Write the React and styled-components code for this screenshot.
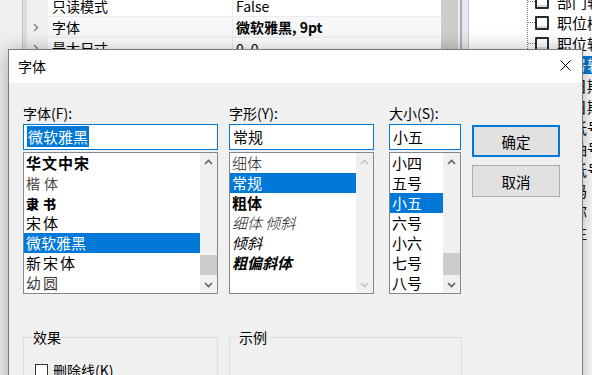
import React from 'react';
import styled, { createGlobalStyle, css } from 'styled-components';

const GlobalStyle = createGlobalStyle`
  html, body { margin: 0; padding: 0; width: 592px; height: 375px; overflow: hidden; background: #fff; }
  body { font-family: "Noto Sans CJK SC", "Noto Sans", sans-serif; font-size: 14px; color: #000; }
  #root { width: 592px; height: 375px; overflow: hidden; }
  * { box-sizing: border-box; }
`;

const Stage = styled.div`
  position: relative;
  width: 592px;
  height: 375px;
  overflow: hidden;
`;

/* ---------- background window ---------- */
const Backdrop = styled.div`
  display: flex;
  height: 100%;
`;
const Gutter = styled.div`
  width: 22px;
  flex-shrink: 0;
  background: #f0f0f0;
`;
const GutterEdge = styled.div`
  width: 5px;
  flex-shrink: 0;
  background: #dedede;
  border-left: 1px solid #c4c4c4;
`;
const PropGrid = styled.div`
  width: 414px;
  flex-shrink: 0;
  display: flex;
  flex-direction: column;
  margin-top: -4px;
`;
const GridRow = styled.div`
  display: flex;
  height: 21px;
  font-size: 14px;
  line-height: 20px;
`;
const Expander = styled.div`
  width: 21px;
  flex-shrink: 0;
  background: #f0f0f0;
  display: flex;
  align-items: center;
  justify-content: center;
  padding-right: 4px;
`;
const GridLabel = styled.div`
  width: 184px;
  flex-shrink: 0;
  padding-left: 4px;
  background: ${p => (p.$alt ? '#f7f8fa' : '#fff')};
  border-bottom: 1px solid #e9edf2;
  white-space: nowrap;
`;
const GridValue = styled.div`
  flex: 1;
  min-width: 0;
  padding-left: 3px;
  background: ${p => (p.$alt ? '#f7f8fa' : '#fff')};
  border-left: 1px solid #e9edf2;
  border-bottom: 1px solid #e9edf2;
  font-weight: ${p => (p.$bold ? 700 : 400)};
  white-space: nowrap;
`;
const VScroll = styled.div`
  width: 17px;
  flex-shrink: 0;
  background: #cdcdcd;
`;
const Splitter = styled.div`
  width: 11px;
  flex-shrink: 0;
  background: #e8e8f0;
  border-left: 2px solid #f0f0f0;
  box-shadow: inset 2px 0 0 #a9a9b8, inset -1px 0 0 #c5c5d5;
`;
const Tree = styled.div`
  flex: 1;
  min-width: 0;
  overflow: hidden;
  background: #fff;
  padding-left: 58px;
`;
const TreeList = styled.div`
  margin-top: -9px;
  border-left: 1px dotted #808080;
  display: flex;
  flex-direction: column;
`;
const TreeRow = styled.div`
  height: 21px;
  display: flex;
  align-items: center;
  font-size: 15px;
  white-space: nowrap;
`;
const TreeStub = styled.div`
  width: 7px;
  flex-shrink: 0;
  border-top: 1px dotted #808080;
`;
const TreeCheck = styled.div`
  width: 14px;
  height: 14px;
  border: 2px solid #2b2b2b;
  border-radius: 1px;
  background: #fff;
  box-shadow: inset 0 -2px 0 #d8d8d8;
  flex-shrink: 0;
`;
const TreeText = styled.span`
  margin-left: 7px;
  padding: 0 1px;
  line-height: 18px;
  ${p => p.$selected && css`background: #0078d7; color: #fff;`}
`;

/* ---------- dialog ---------- */
const Dialog = styled.div`
  position: absolute;
  left: 8px;
  top: 49px;
  width: 575px;
  height: 345px;
  border: 1px solid #7a7a7a;
  background: #f0f0f0;
  box-shadow: 0 2px 20px rgba(0, 0, 0, 0.32);
  display: flex;
  flex-direction: column;
`;
const TitleBar = styled.div`
  height: 33px;
  background: #fff;
  display: flex;
  align-items: center;
  padding-left: 9px;
  padding-bottom: 2px;
  font-size: 14px;
`;
const Title = styled.div`
  flex: 1;
`;
const CloseBtn = styled.div`
  width: 34px;
  height: 31px;
  display: flex;
  align-items: center;
  justify-content: center;
`;
const Body = styled.div`
  padding: 22px 0 0 14px;
  display: flex;
  flex-direction: column;
`;
const MainRow = styled.div`
  display: flex;
  align-items: flex-start;
`;
const Column = styled.div`
  width: ${p => p.$w}px;
  margin-left: ${p => p.$ml || 0}px;
  display: flex;
  flex-direction: column;
`;
const FieldLabel = styled.div`
  height: 16px;
  line-height: 16px;
  font-size: 14px;
  margin-bottom: 3px;
  white-space: nowrap;
`;
const TextBox = styled.div`
  height: 26px;
  background: #fff;
  border: 1px solid #0078d7;
  padding-left: 3px;
  font-size: 15px;
  line-height: 24px;
  white-space: nowrap;
`;
const Highlight = styled.span`
  background: #0078d7;
  color: #fff;
  padding: 0 1px;
`;
const ListBox = styled.div`
  margin-top: 2px;
  height: 142px;
  border: 1px solid #828790;
  background: #fff;
  display: flex;
`;
const Items = styled.div`
  flex: 1;
  display: flex;
  flex-direction: column;
`;
const Item = styled.div`
  height: 20px;
  line-height: 20px;
  padding-left: 2px;
  font-size: 15px;
  white-space: nowrap;
  overflow: hidden;
  ${p => p.$selected && css`background: #0078d7; color: #fff;`}
`;
const FontName = styled.span`
  ${p => p.$v === 'zhongsong' && css`font-weight: 700; letter-spacing: 1px;`}
  ${p => p.$v === 'kai' && css`color: #4a4a4a; letter-spacing: 4px; font-size: 14px;`}
  ${p => p.$v === 'li' && css`font-weight: 900; letter-spacing: 4px; font-size: 13px;`}
  ${p => p.$v === 'song' && css`letter-spacing: 2px;`}
  ${p => p.$v === 'yuan' && css`color: #3a3a3a; letter-spacing: 2px;`}
`;
const StyleName = styled.span`
  font-weight: ${p => (p.$bold ? 700 : p.$light ? 300 : 400)};
  font-style: ${p => (p.$italic ? 'italic' : 'normal')};
  color: ${p => (p.$light ? '#1a1a1a' : 'inherit')};
`;
const ScrollBar = styled.div`
  width: 17px;
  background: #f0f0f0;
  display: flex;
  flex-direction: column;
`;
const ArrowBox = styled.div`
  height: 17px;
  display: flex;
  align-items: center;
  justify-content: center;
`;
const Track = styled.div`
  flex: 1;
  display: flex;
  flex-direction: column;
  justify-content: flex-end;
  padding-bottom: 1px;
`;
const Thumb = styled.div`
  height: ${p => p.$h}px;
  background: #cdcdcd;
`;
const Buttons = styled.div`
  width: 88px;
  margin-left: 11px;
  margin-top: 20px;
  display: flex;
  flex-direction: column;
  gap: 8px;
`;
const Button = styled.div`
  height: 32px;
  background: #e1e1e1;
  border: ${p => (p.$default ? '2px solid #0078d7' : '1px solid #adadad')};
  display: flex;
  align-items: center;
  justify-content: center;
  font-size: 14.5px;
`;
const BottomRow = styled.div`
  display: flex;
  margin-top: 34px;
`;
const Group = styled.fieldset`
  margin: 0 0 0 ${p => p.$ml || 0}px;
  width: ${p => p.$w}px;
  height: 70px;
  border: 1px solid #dcdcdc;
  padding: 16px 0 0 11px;
  min-width: 0;
`;
const Legend = styled.legend`
  font-size: 14px;
  line-height: 18px;
  padding: 0 1px;
  margin-left: -3px;
`;
const CheckRow = styled.label`
  display: flex;
  align-items: center;
  gap: 5px;
  font-size: 14px;
  line-height: 16px;
`;
const CheckBox = styled.span`
  width: 13px;
  height: 13px;
  border: 1px solid #333;
  background: #fff;
  flex-shrink: 0;
`;

const Chevron = ({ dir, disabled }) => (
  <svg width="9" height="6" viewBox="0 0 9 6">
    <polyline
      points={dir === 'up' ? '1,5 4.5,1.5 8,5' : '1,1 4.5,4.5 8,1'}
      fill="none"
      stroke={disabled ? '#c4c4c4' : '#606060'}
      strokeWidth="1.6"
    />
  </svg>
);

const Scroll = ({ thumb, disabled }) => (
  <ScrollBar>
    <ArrowBox><Chevron dir="up" disabled={disabled} /></ArrowBox>
    <Track>{thumb ? <Thumb $h={thumb} /> : null}</Track>
    <ArrowBox><Chevron dir="down" disabled={disabled} /></ArrowBox>
  </ScrollBar>
);

const RightChevron = () => (
  <svg width="6" height="9" viewBox="0 0 6 9">
    <polyline points="1,1 4.5,4.5 1,8" fill="none" stroke="#8a8a8a" strokeWidth="1.5" />
  </svg>
);

const gridRows = [
  { label: '只读模式', value: 'False' },
  { label: '字体', value: '微软雅黑, 9pt', bold: true, expand: true, alt: true },
  { label: '最大尺寸', value: '0, 0', expand: true },
];

const treeRows = [
  '部门辖区', '职位树形', '职位辖区', '编号辖区', '职日期', '职日期', '主柢号', '主轴号', '号柢号', '号码', '名称', '备注',
];

const fonts = [
  { name: '华文中宋', v: 'zhongsong' },
  { name: '楷体', v: 'kai' },
  { name: '隶书', v: 'li' },
  { name: '宋体', v: 'song' },
  { name: '微软雅黑', v: 'yahei', selected: true },
  { name: '新宋体', v: 'song' },
  { name: '幼圆', v: 'yuan' },
];

const styles = [
  { name: '细体', light: true },
  { name: '常规', selected: true },
  { name: '粗体', bold: true },
  { name: '细体 倾斜', light: true, italic: true },
  { name: '倾斜', italic: true },
  { name: '粗偏斜体', bold: true, italic: true },
];

const sizes = ['小四', '五号', '小五', '六号', '小六', '七号', '八号'];

export default function App() {
  return (
    <Stage>
      <GlobalStyle />
      <Backdrop>
        <Gutter />
        <GutterEdge />
        <PropGrid>
          {gridRows.map(r => (
            <GridRow key={r.label}>
              <Expander>{r.expand ? <RightChevron /> : null}</Expander>
              <GridLabel $alt={r.alt}>{r.label}</GridLabel>
              <GridValue $alt={r.alt} $bold={r.bold}>{r.value}</GridValue>
            </GridRow>
          ))}
        </PropGrid>
        <VScroll />
        <Splitter />
        <Tree>
          <TreeList>
            {treeRows.map((t, i) => (
              <TreeRow key={i}>
                <TreeStub />
                <TreeCheck />
                <TreeText $selected={i === 3}>{t}</TreeText>
              </TreeRow>
            ))}
          </TreeList>
        </Tree>
      </Backdrop>

      <Dialog>
        <TitleBar>
          <Title>字体</Title>
          <CloseBtn>
            <svg width="11" height="11" viewBox="0 0 11 11">
              <path d="M0.5 0.5 L10.5 10.5 M10.5 0.5 L0.5 10.5" stroke="#000" strokeWidth="1" />
            </svg>
          </CloseBtn>
        </TitleBar>
        <Body>
          <MainRow>
            <Column $w={195}>
              <FieldLabel>字体(F):</FieldLabel>
              <TextBox><Highlight>微软雅黑</Highlight></TextBox>
              <ListBox>
                <Items>
                  {fonts.map(f => (
                    <Item key={f.name} $selected={f.selected}>
                      <FontName $v={f.v}>{f.name}</FontName>
                    </Item>
                  ))}
                </Items>
                <Scroll thumb={20} />
              </ListBox>
            </Column>
            <Column $w={145} $ml={11}>
              <FieldLabel>字形(Y):</FieldLabel>
              <TextBox>常规</TextBox>
              <ListBox>
                <Items>
                  {styles.map(s => (
                    <Item key={s.name} $selected={s.selected}>
                      <StyleName $bold={s.bold} $light={s.light && !s.selected} $italic={s.italic}>{s.name}</StyleName>
                    </Item>
                  ))}
                </Items>
                <Scroll disabled />
              </ListBox>
            </Column>
            <Column $w={72} $ml={15}>
              <FieldLabel>大小(S):</FieldLabel>
              <TextBox>小五</TextBox>
              <ListBox>
                <Items>
                  {sizes.map(s => (
                    <Item key={s} $selected={s === '小五'}>{s}</Item>
                  ))}
                </Items>
                <Scroll thumb={22} />
              </ListBox>
            </Column>
            <Buttons>
              <Button $default>确定</Button>
              <Button>取消</Button>
            </Buttons>
          </MainRow>
          <BottomRow>
            <Group $w={195}>
              <Legend>效果</Legend>
              <CheckRow>
                <CheckBox />
                删除线(K)
              </CheckRow>
            </Group>
            <Group $w={233} $ml={11}>
              <Legend>示例</Legend>
            </Group>
          </BottomRow>
        </Body>
      </Dialog>
    </Stage>
  );
}
